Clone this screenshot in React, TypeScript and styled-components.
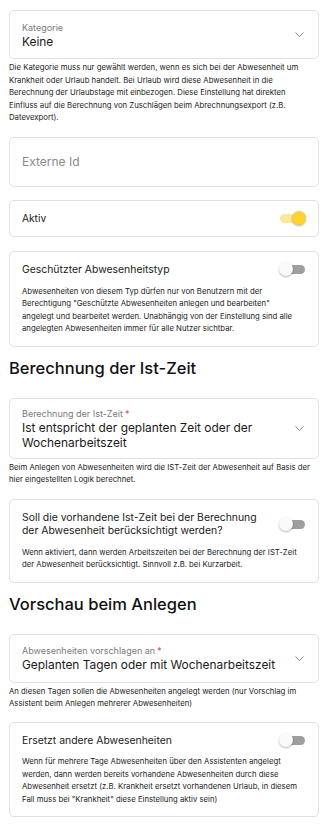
import React from "react";
import styled, { createGlobalStyle } from "styled-components";

const Global = createGlobalStyle`
  html, body { margin: 0; padding: 0; background: #fff; }
  body { font-family: Inter, "Noto Sans", sans-serif; color: #1f1f1f; }
  * { box-sizing: border-box; }
`;

const Page = styled.div`
  width: 335px;
  padding: 10px 16px 16px 9px;
  display: flex;
  flex-direction: column;
`;

const Card = styled.div<{ $mt?: number }>`
  border: 1px solid #e2e2e2;
  border-radius: 5px;
  background: #fff;
  margin-top: ${(p) => p.$mt ?? 0}px;
`;

const SelectBox = styled(Card)`
  display: flex;
  align-items: center;
  padding: 8px 14px 8px 12px;
  min-height: 49px;
`;

const SelectText = styled.div`
  flex: 1;
  display: flex;
  flex-direction: column;
`;

const SelectLabel = styled.div`
  font-size: 9px;
  color: #7a7a7a;
  line-height: 13px;
`;

const Req = styled.span`
  color: #e53935;
  margin-left: 2px;
`;

const SelectValue = styled.div`
  font-size: 11.9px;
  line-height: 15px;
  color: #1a1a1a;
`;

const Chevron = styled.svg`
  width: 9px;
  height: 5px;
  flex: none;
  margin-left: 8px;
`;

const Helper = styled.p`
  margin: 2px 0 0 0;
  padding-right: 4px;
  font-size: 7.75px;
  line-height: 12.5px;
  color: #222;
`;

const InputBox = styled(Card)`
  height: 50px;
  display: flex;
  align-items: center;
  padding: 0 12px;
  font-size: 12px;
  color: #8a8a8a;
`;

const ToggleCard = styled(Card)`
  padding: 11px 15px 11px 12px;
`;

const ToggleRow = styled.div`
  display: flex;
  align-items: center;
  justify-content: space-between;
  gap: 16px;
`;

const ToggleTitle = styled.div<{ $size?: number }>`
  font-size: ${(p) => p.$size ?? 10.4}px;
  line-height: 13.5px;
  color: #1a1a1a;
`;

const CardText = styled.p`
  margin: 8px 0 0 0;
  font-size: 7.75px;
  line-height: 12.5px;
  color: #222;
`;

const Track = styled.div<{ $on?: boolean }>`
  position: relative;
  width: 25px;
  height: 9px;
  border-radius: 5px;
  background: ${(p) => (p.$on ? "#fde79a" : "#9e9e9e")};
  flex: none;
  margin-right: -2px;
`;

const Thumb = styled.div<{ $on?: boolean }>`
  position: absolute;
  top: -3px;
  left: ${(p) => (p.$on ? "12px" : "-1px")};
  width: 14px;
  height: 14px;
  border-radius: 50%;
  background: ${(p) => (p.$on ? "#fdd233" : "#fafafa")};
  box-shadow: 0 1px 2px rgba(0, 0, 0, 0.3);
`;

const Heading = styled.h2<{ $mt?: number }>`
  margin: ${(p) => p.$mt ?? 0}px 0 0 0;
  font-size: 16.5px;
  font-weight: 500;
  line-height: 20px;
  color: #111;
`;

const ChevronIcon = () => (
  <Chevron viewBox="0 0 9 5">
    <path d="M0.5 0.5l4 4 4-4" fill="none" stroke="#7a7a7a" strokeWidth="0.9" />
  </Chevron>
);

const Switch = ({ on }: { on?: boolean }) => (
  <Track $on={on}>
    <Thumb $on={on} />
  </Track>
);

export default function App() {
  return (
    <>
      <Global />
      <Page>
        <SelectBox>
          <SelectText>
            <SelectLabel>Kategorie</SelectLabel>
            <SelectValue>Keine</SelectValue>
          </SelectText>
          <ChevronIcon />
        </SelectBox>
        <Helper>
          Die Kategorie muss nur gewählt werden, wenn es sich bei der Abwesenheit um
          Krankheit oder Urlaub handelt. Bei Urlaub wird diese Abwesenheit in die
          Berechnung der Urlaubstage mit einbezogen. Diese Einstellung hat direkten
          Einfluss auf die Berechnung von Zuschlägen beim Abrechnungsexport (z.B.
          Datevexport).
        </Helper>

        <InputBox $mt={13}>Externe Id</InputBox>

        <ToggleCard $mt={13}>
          <ToggleRow>
            <ToggleTitle $size={10.2}>Aktiv</ToggleTitle>
            <Switch on />
          </ToggleRow>
        </ToggleCard>

        <ToggleCard $mt={14}>
          <ToggleRow>
            <ToggleTitle>Geschützter Abwesenheitstyp</ToggleTitle>
            <Switch />
          </ToggleRow>
          <CardText>
            Abwesenheiten von diesem Typ dürfen nur von Benutzern mit der
            Berechtigung "Geschützte Abwesenheiten anlegen und bearbeiten"
            angelegt und bearbeitet werden. Unabhängig von der Einstellung sind alle
            angelegten Abwesenheiten immer für alle Nutzer sichtbar.
          </CardText>
        </ToggleCard>

        <Heading $mt={11}>Berechnung der Ist-Zeit</Heading>

        <SelectBox $mt={20}>
          <SelectText>
            <SelectLabel>
              Berechnung der Ist-Zeit<Req>*</Req>
            </SelectLabel>
            <SelectValue>
              Ist entspricht der geplanten Zeit oder der Wochenarbeitszeit
            </SelectValue>
          </SelectText>
          <ChevronIcon />
        </SelectBox>
        <Helper>
          Beim Anlegen von Abwesenheiten wird die IST-Zeit der Abwesenheit auf Basis der
          hier eingestellten Logik berechnet.
        </Helper>

        <ToggleCard $mt={13}>
          <ToggleRow>
            <ToggleTitle>
              Soll die vorhandene Ist-Zeit bei der Berechnung der Abwesenheit
              berücksichtigt werden?
            </ToggleTitle>
            <Switch />
          </ToggleRow>
          <CardText>
            Wenn aktiviert, dann werden Arbeitszeiten bei der Berechnung der IST-Zeit
            der Abwesenheit berücksichtigt. Sinnvoll z.B. bei Kurzarbeit.
          </CardText>
        </ToggleCard>

        <Heading $mt={11}>Vorschau beim Anlegen</Heading>

        <SelectBox $mt={20}>
          <SelectText>
            <SelectLabel>
              Abwesenheiten vorschlagen an<Req>*</Req>
            </SelectLabel>
            <SelectValue>Geplanten Tagen oder mit Wochenarbeitszeit</SelectValue>
          </SelectText>
          <ChevronIcon />
        </SelectBox>
        <Helper>
          An diesen Tagen sollen die Abwesenheiten angelegt werden (nur Vorschlag im
          Assistent beim Anlegen mehrerer Abwesenheiten)
        </Helper>

        <ToggleCard $mt={12}>
          <ToggleRow>
            <ToggleTitle>Ersetzt andere Abwesenheiten</ToggleTitle>
            <Switch />
          </ToggleRow>
          <CardText>
            Wenn für mehrere Tage Abwesenheiten über den Assistenten angelegt
            werden, dann werden bereits vorhandene Abwesenheiten durch diese
            Abwesenheit ersetzt (z.B. Krankheit ersetzt vorhandenen Urlaub, in diesem
            Fall muss bei "Krankheit" diese Einstellung aktiv sein)
          </CardText>
        </ToggleCard>
      </Page>
    </>
  );
}
